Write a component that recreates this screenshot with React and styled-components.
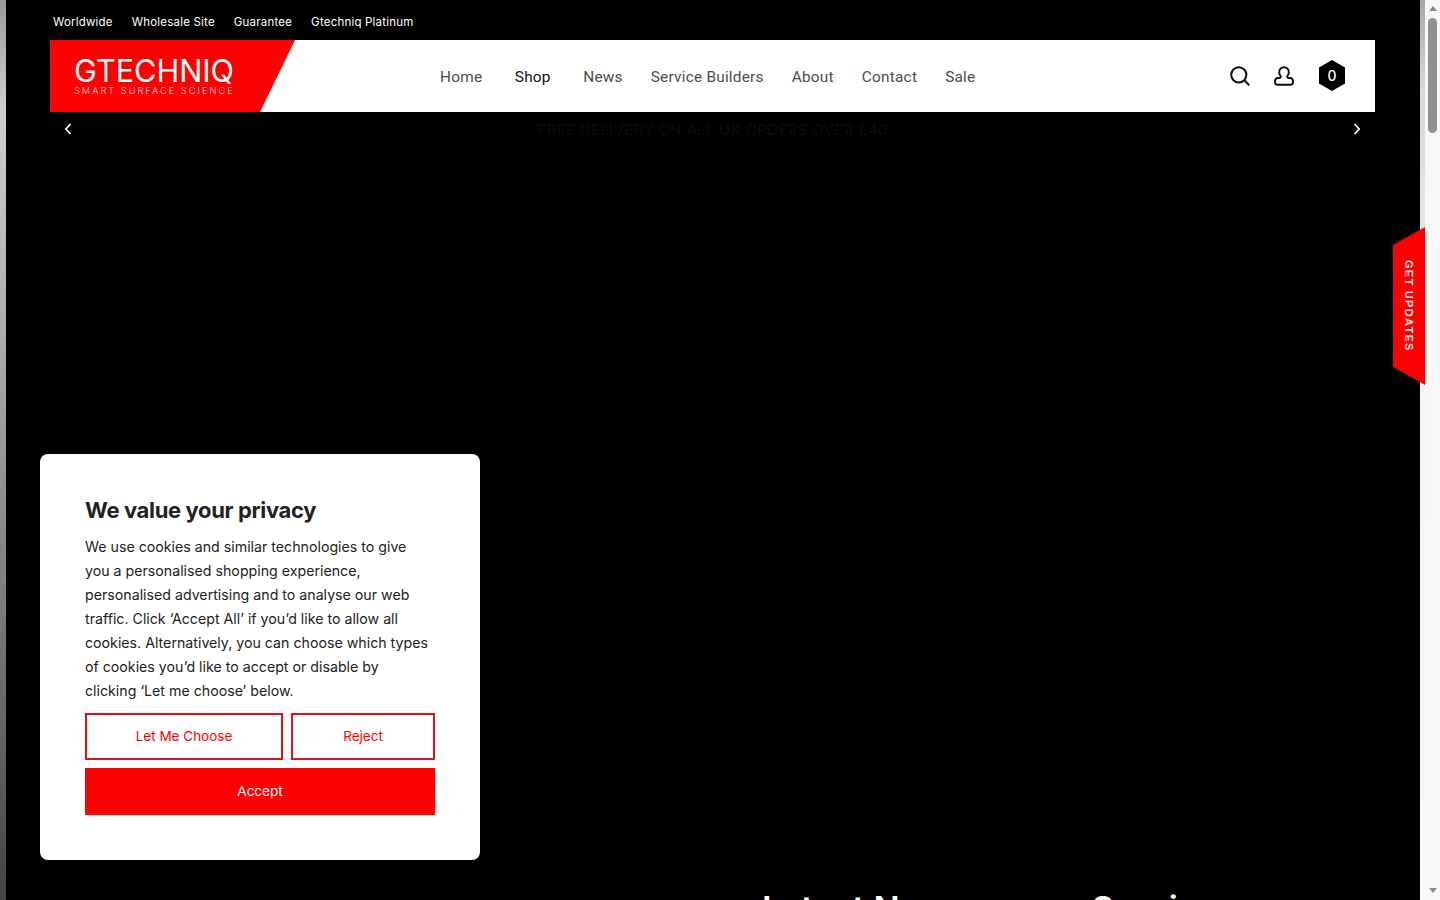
import React from "react";
import styled, { createGlobalStyle } from "styled-components";

const Global = createGlobalStyle`
  html, body { margin: 0; padding: 0; background: #000; overflow: hidden; height: 100%; }
  * { box-sizing: border-box; }
  #root { height: 100%; }
`;

const Page = styled.div`
  display: flex;
  width: 1440px;
  height: 900px;
  overflow: hidden;
  font-family: "Inter", "Liberation Sans", sans-serif;
  position: relative;
`;
const EdgeStrip = styled.div`
  flex: 0 0 6px;
  background: linear-gradient(180deg, #999 0%, #cfcfcf 12%, #a8a8a8 40%, #777 70%, #444 100%);
`;
const Main = styled.main`
  flex: 1 1 auto;
  min-width: 0;
  background: #000;
  padding: 0 45px 0 44px;
  display: flex;
  flex-direction: column;
`;
const TopBar = styled.nav`
  flex: 0 0 40px;
  display: flex;
  align-items: center;
  gap: 19px;
  padding: 3px 0 0 3px;
`;
const TopLink = styled.a`
  color: #fff;
  font-size: 11.5px;
  font-weight: 400;
  letter-spacing: 0.2px;
  white-space: nowrap;
`;
const Header = styled.header`
  flex: 0 0 72px;
  background: #fff;
  display: flex;
  align-items: stretch;
`;
const Logo = styled.a`
  flex: 0 0 245px;
  background: #f00;
  clip-path: polygon(0 0, 100% 0, 85.7% 100%, 0 100%);
  color: #fff;
  padding: 18px 0 0 24px;
  display: flex;
  flex-direction: column;
`;
const LogoWord = styled.span`
  font-size: 30.6px;
  line-height: 26px;
  font-weight: 400;
  white-space: nowrap;
`;
const LogoTag = styled.span`
  margin-top: 2px;
  font-size: 9.2px;
  line-height: 10px;
  font-weight: 300;
  letter-spacing: 2.05px;
  color: #ffdada;
  white-space: nowrap;
`;
const Nav = styled.nav`
  margin-left: 145px;
  padding-top: 2px;
  display: flex;
  align-items: center;
  gap: 28px;
`;
const NavLink = styled.a`
  font-family: "Roboto", sans-serif;
  font-size: 15.4px;
  letter-spacing: 0.22px;
  color: ${(p) => (p.$active ? "#111" : "#4c4c4c")};
  padding-right: ${(p) => (p.$menu ? "4.5px" : "0")};
  white-space: nowrap;
`;
const Icons = styled.div`
  margin-left: auto;
  display: flex;
  align-items: center;
  gap: 24px;
  padding-right: 30px;
`;
const IconBtn = styled.span`
  display: flex;
  width: 20px;
  height: 20px;
`;
const Cart = styled.span`
  width: 26px;
  height: 31px;
  margin: 0 0 1px 1px;
  padding-bottom: 1px;
  display: flex;
  align-items: center;
  justify-content: center;
  background: #000;
  clip-path: polygon(50% 0, 100% 24%, 100% 76%, 50% 100%, 0 76%, 0 24%);
  color: #fff;
  font-size: 14px;
  font-weight: 500;
`;
const Promo = styled.div`
  flex: 0 0 34px;
  display: flex;
  align-items: center;
  justify-content: space-between;
  padding: 0 14px;
`;
const PromoText = styled.span`
  font-size: 15px;
  color: #0d0d0d;
  letter-spacing: 0.33px;
  white-space: nowrap;
`;
const Hero = styled.div`
  flex: 0 0 743px;
`;
const SectionTitle = styled.h2`
  margin: 0;
  padding-left: 712px;
  color: #fff;
  font-size: 34.5px;
  line-height: 40px;
  font-weight: 600;
  white-space: nowrap;
`;
const SideBand = styled.div`
  flex: 0 0 5px;
  background: linear-gradient(180deg, #a8a8a8 0%, #d8d8d8 10%, #f4f4f4 40%, #fafafa 100%);
`;
const Scrollbar = styled.div`
  flex: 0 0 15px;
  background: #f8f8f8;
  display: flex;
  flex-direction: column;
  align-items: center;
  padding: 6px 0 7px 0;
`;
const Arrow = styled.span`
  width: 0;
  height: 0;
  border-left: 4px solid transparent;
  border-right: 4px solid transparent;
  ${(p) => (p.$down ? "border-top: 5px solid #8a8a8a;" : "border-bottom: 5px solid #8a8a8a;")}
`;
const Thumb = styled.span`
  width: 9px;
  height: 115px;
  margin: 7px 0 auto 0;
  background: #919191;
  border-radius: 5px;
`;
const UpdatesTab = styled.a`
  position: absolute;
  left: 1393px;
  top: 227px;
  width: 32px;
  height: 158px;
  background: #f00;
  clip-path: polygon(0 18px, 100% 0, 100% 100%, 0 140px);
  display: flex;
  align-items: center;
  justify-content: center;
  color: #ffe4e4;
  font-family: "Liberation Sans", sans-serif;
  font-size: 11px;
  font-weight: 700;
  letter-spacing: 1.3px;
  writing-mode: vertical-rl;
  white-space: nowrap;
`;
const Cookie = styled.section`
  position: absolute;
  left: 40px;
  top: 454px;
  width: 440px;
  height: 406px;
  background: #fff;
  border-radius: 8px;
  padding: 41px 45px 0;
  color: #222;
`;
const CookieTitle = styled.h3`
  margin: 0 0 10px;
  font-size: 22px;
  line-height: 30px;
  font-weight: 700;
  letter-spacing: -0.35px;
`;
const CookieText = styled.p`
  margin: 0 0 10px;
  font-size: 14.2px;
  line-height: 24px;
  white-space: nowrap;
`;
const ButtonRow = styled.div`
  display: grid;
  grid-template-columns: 198px 144px;
  gap: 8px;
`;
const CookieButton = styled.button`
  height: 47px;
  font-family: inherit;
  font-size: 13.5px;
  color: ${(p) => (p.$solid ? "#fff" : "#f00")};
  background: ${(p) => (p.$solid ? "#f00" : "#fff")};
  border: ${(p) => (p.$solid ? "none" : "2px solid #e0101a")};
  grid-column: ${(p) => (p.$solid ? "1 / -1" : "auto")};
  padding: 0 0 1px;
`;

const Chevron = ({ dir }) => (
  <svg width="8" height="12" viewBox="0 0 8 12" fill="none" stroke="#fff" strokeWidth="1.7">
    <path d={dir === "left" ? "M6.5 1 1.8 6l4.7 5" : "M1.5 1l4.7 5-4.7 5"} />
  </svg>
);

const cookieLines = [
  "We use cookies and similar technologies to give",
  "you a personalised shopping experience,",
  "personalised advertising and to analyse our web",
  "traffic. Click ‘Accept All’ if you’d like to allow all",
  "cookies. Alternatively, you can choose which types",
  "of cookies you’d like to accept or disable by",
  "clicking ‘Let me choose’ below.",
];

export default function App() {
  return (
    <>
      <Global />
      <Page>
        <EdgeStrip />
        <Main>
          <TopBar>
            {["Worldwide", "Wholesale Site", "Guarantee", "Gtechniq Platinum"].map((t) => (
              <TopLink key={t}>{t}</TopLink>
            ))}
          </TopBar>
          <Header>
            <Logo>
              <LogoWord>GTECHNIQ</LogoWord>
              <LogoTag>SMART SURFACE SCIENCE</LogoTag>
            </Logo>
            <Nav>
              <NavLink $menu>Home</NavLink>
              <NavLink $menu $active>Shop</NavLink>
              <NavLink>News</NavLink>
              <NavLink>Service Builders</NavLink>
              <NavLink>About</NavLink>
              <NavLink>Contact</NavLink>
              <NavLink>Sale</NavLink>
            </Nav>
            <Icons>
              <IconBtn>
                <svg width="20" height="20" viewBox="0 0 20 20" fill="none" stroke="#111" strokeWidth="2">
                  <circle cx="8.8" cy="8.8" r="7.6" />
                  <path d="M14.3 14.3 19.2 19.2" />
                </svg>
              </IconBtn>
              <IconBtn>
                <svg width="20" height="20" viewBox="0 0 20 20" fill="none" stroke="#111" strokeWidth="1.9">
                  <path d="M10 1.2c-2.9 0-4.8 2.2-4.8 5 0 1.7.6 3 1.5 3.9v.9c0 .5-.4.9-.9 1H3.5C2 12.4 1 13.6 1 15.3v.7c0 1.6 1 2.8 2.6 2.8h12.8c1.6 0 2.6-1.2 2.6-2.8v-.7c0-1.7-1-2.9-2.5-3.3h-2.3c-.5-.1-.9-.5-.9-1v-.9c.9-.9 1.5-2.2 1.5-3.9 0-2.8-1.9-5-4.8-5Z" />
                </svg>
              </IconBtn>
              <Cart>0</Cart>
            </Icons>
          </Header>
          <Promo>
            <Chevron dir="left" />
            <PromoText>FREE DELIVERY ON ALL UK ORDERS OVER £40</PromoText>
            <Chevron dir="right" />
          </Promo>
          <Hero />
          <SectionTitle>Latest News on our Services</SectionTitle>
        </Main>
        <SideBand />
        <Scrollbar>
          <Arrow />
          <Thumb />
          <Arrow $down />
        </Scrollbar>
        <UpdatesTab>GET UPDATES</UpdatesTab>
        <Cookie>
          <CookieTitle>We value your privacy</CookieTitle>
          <CookieText>
            {cookieLines.map((line) => (
              <React.Fragment key={line}>
                {line}
                <br />
              </React.Fragment>
            ))}
          </CookieText>
          <ButtonRow>
            <CookieButton>Let Me Choose</CookieButton>
            <CookieButton>Reject</CookieButton>
            <CookieButton $solid>Accept</CookieButton>
          </ButtonRow>
        </Cookie>
      </Page>
    </>
  );
}
